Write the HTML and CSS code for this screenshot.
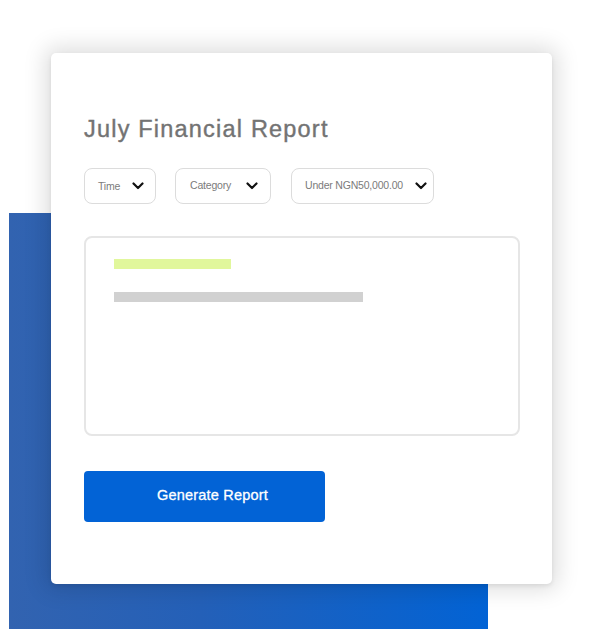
FILE: index.html
```html
<!DOCTYPE html>
<html>
<head>
<meta charset="utf-8">
<link rel="stylesheet" href="styles.css">
</head>
<body>
<div class="stage">
  <div class="backdrop"></div>
  <div class="card">
    <h1 class="title">July Financial Report</h1>
    <div class="filters">
      <div class="select select-time"><span class="label">Time</span><svg class="chev" viewBox="0 0 12 8" width="12" height="8"><path d="M1.5 1.5 L6 6 L10.5 1.5" fill="none" stroke="#111" stroke-width="2.2" stroke-linecap="round" stroke-linejoin="round"/></svg></div>
      <div class="select select-cat"><span class="label label-up">Category</span><svg class="chev" viewBox="0 0 12 8" width="12" height="8"><path d="M1.5 1.5 L6 6 L10.5 1.5" fill="none" stroke="#111" stroke-width="2.2" stroke-linecap="round" stroke-linejoin="round"/></svg></div>
      <div class="select select-amt"><span class="label label-up">Under NGN50,000.00</span><svg class="chev" viewBox="0 0 12 8" width="12" height="8"><path d="M1.5 1.5 L6 6 L10.5 1.5" fill="none" stroke="#111" stroke-width="2.2" stroke-linecap="round" stroke-linejoin="round"/></svg></div>
    </div>
    <div class="preview">
      <div class="bar bar-accent"></div>
      <div class="bar bar-grey"></div>
    </div>
    <button class="generate">Generate Report</button>
  </div>
</div>
</body>
</html>
```
FILE: styles.css
```css
* { box-sizing: border-box; }
html, body { margin: 0; padding: 0; background: #fff; }
body { font-family: "Liberation Sans", Arial, sans-serif; width: 604px; height: 636px; overflow: hidden; }
.stage { position: relative; width: 604px; height: 636px; padding: 53px 0 0 51px; }
.backdrop {
  position: absolute; left: 9px; top: 213px; width: 479px; height: 416px;
  background: linear-gradient(90deg, #3263b0 0%, #2460b8 40%, #0263d5 100%);
}
.card {
  position: relative; width: 501px; height: 531px; background: #fff;
  border-radius: 5px; padding: 58px 32px 0 33px;
  box-shadow: 0 0 22px 6px rgba(0,0,0,0.13), 0 2px 4px rgba(0,0,0,0.08);
}
.title {
  margin: 0; font-size: 23.5px; font-weight: 400; color: #737373; line-height: 36px;
  letter-spacing: 1.2px; -webkit-text-stroke: 0.4px #737373;
}
.filters { display: flex; gap: 19px; margin-top: 21px; }
.select {
  height: 36px; border: 1px solid #dcdcdc; border-radius: 8px;
  display: flex; align-items: center; padding: 0 12px 0 13px; gap: 12px;
}
.select-time { width: 72px; }
.select-cat { width: 96px; padding-left: 14px; gap: 14px; }
.select-amt { width: 143px; padding-left: 13px; gap: 12px; margin-left: 1px; }
.label { font-size: 10.5px; color: #7b7b7b; letter-spacing: -0.2px; flex: 1; white-space: nowrap; }
.label-up { position: relative; top: -1px; }
.chev { flex: none; }
.preview {
  margin-top: 32px; height: 200px; border: 2px solid #e6e6e6; border-radius: 8px;
  padding: 21px 0 0 28px; display: flex; flex-direction: column; gap: 23px;
}
.bar { height: 10px; }
.bar-accent { width: 117px; background: #e1f79c; }
.bar-grey { width: 249px; background: #d1d1d1; }
.generate {
  margin-top: 35px; width: 241px; height: 51px; border: none; border-radius: 4px;
  background: #0263d6; color: #fff; font-family: "Liberation Sans", Arial, sans-serif;
  font-size: 14.5px; font-weight: 400; letter-spacing: 0.2px; -webkit-text-stroke: 0.3px #fff;
  display: flex; align-items: center; justify-content: center; padding: 0 0 3px 16px;
}
```
